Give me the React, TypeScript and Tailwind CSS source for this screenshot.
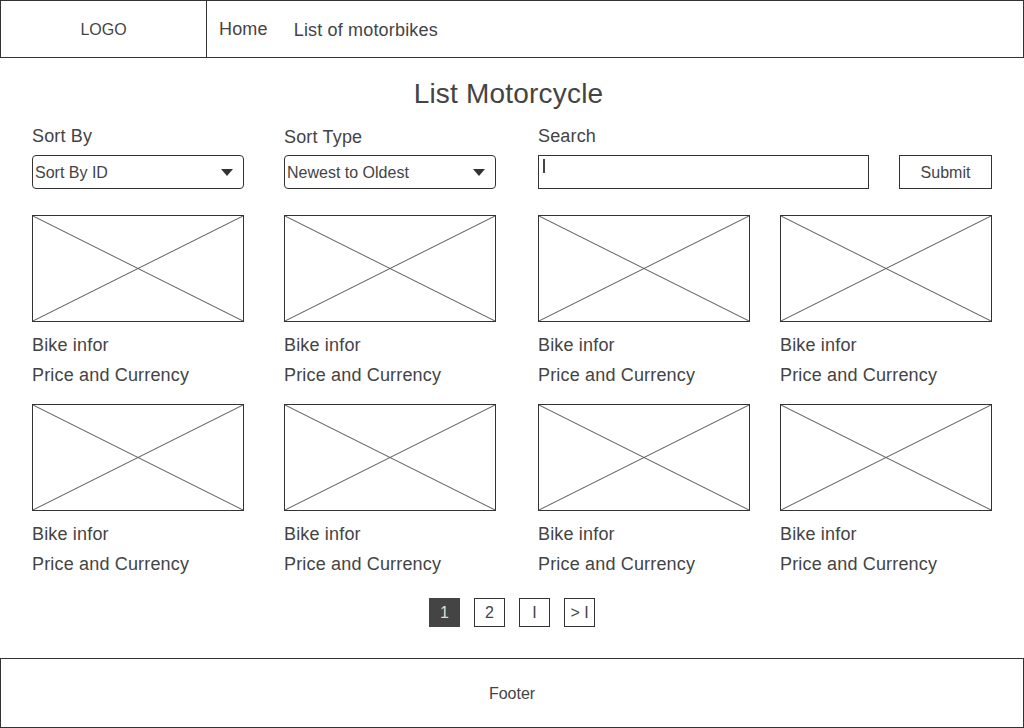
const bikes = Array.from({ length: 8 }, (_, i) => i)

function Placeholder() {
  return (
    <div className="relative h-[107px] w-[212px] border border-[#333]">
      <svg className="absolute inset-0 h-full w-full" viewBox="0 0 100 100" preserveAspectRatio="none">
        <line x1="0" y1="0" x2="100" y2="100" stroke="#555" strokeWidth="1" vectorEffect="non-scaling-stroke" />
        <line x1="100" y1="0" x2="0" y2="100" stroke="#555" strokeWidth="1" vectorEffect="non-scaling-stroke" />
      </svg>
    </div>
  )
}

function FakeSelect({ value }: { value: string }) {
  return (
    <div className="flex h-[34px] w-[212px] items-center justify-between rounded-[4px] border border-[#333] pl-[2px] pr-[10px] text-[16px] tracking-normal">
      <span className="mt-[1px]">{value}</span>
      <span className="h-0 w-0 border-x-[6px] border-t-[7px] border-x-transparent border-t-[#333]" />
    </div>
  )
}

export default function App() {
  return (
    <div className="flex h-[728px] w-[1024px] flex-col bg-white text-[#444]" style={{ fontFamily: '"Liberation Sans", Arial, sans-serif' }}>
      {/* header */}
      <div className="flex h-[58px] border border-[#333]">
        <div className="flex w-[206px] items-center justify-center border-r border-[#333] pt-[2px] text-[16px]">LOGO</div>
        <div className="flex items-center pl-[12px] text-[18px] tracking-[0.17px]">
          <span>Home</span>
          <span className="ml-[26px] mt-[2px]">List of motorbikes</span>
        </div>
      </div>

      <h1 className="mt-[20px] pr-[7px] text-center text-[28px] leading-[32px] tracking-[0.2px]">List Motorcycle</h1>

      {/* filters */}
      <div className="mt-[16px] grid grid-cols-[252px_254px_454px] px-[32px] text-[18px] tracking-[0.17px]">
        <div>
          <div className="leading-[20px]">Sort By</div>
          <div className="mt-[9px]">
            <FakeSelect value="Sort By ID" />
          </div>
        </div>
        <div>
          <div className="mt-[1px] leading-[20px]">Sort Type</div>
          <div className="mt-[8px]">
            <FakeSelect value="Newest to Oldest" />
          </div>
        </div>
        <div>
          <div className="leading-[20px]">Search</div>
          <div className="mt-[9px] flex gap-[30px]">
            <div className="h-[34px] w-[331px] border border-[#333]">
              <div className="ml-[4px] mt-[3px] h-[14px] w-[2px] bg-[#444]" />
            </div>
            <button className="flex h-[34px] w-[93px] items-center justify-center border border-[#333] pt-[2px] text-[16px] tracking-normal">Submit</button>
          </div>
        </div>
      </div>

      {/* bikes */}
      <div className="mt-[26px] grid grid-cols-[252px_254px_242px_212px] gap-y-[14px] px-[32px]">
        {bikes.map((b) => (
          <div key={b}>
            <Placeholder />
            <div className="mt-[8px] text-[18px] leading-[30px] tracking-[0.17px]">
              <div>Bike infor</div>
              <div>Price and Currency</div>
            </div>
          </div>
        ))}
      </div>

      {/* pagination */}
      <div className="mt-[19px] flex justify-center gap-[14px] text-[16px]">
        <span className="flex h-[29px] w-[31px] items-center justify-center bg-[#444] pt-[1px] text-[#ddd]">1</span>
        <span className="flex h-[29px] w-[31px] items-center justify-center border border-[#333] pt-[1px]">2</span>
        <span className="flex h-[29px] w-[31px] items-center justify-center border border-[#333] pt-[1px]">I</span>
        <span className="flex h-[29px] w-[31px] items-center justify-center border border-[#333] pt-[1px]">&gt; I</span>
      </div>

      <div className="mt-auto flex h-[70px] items-center justify-center border border-[#333] pt-[2px] text-[16px]">Footer</div>
    </div>
  )
}
